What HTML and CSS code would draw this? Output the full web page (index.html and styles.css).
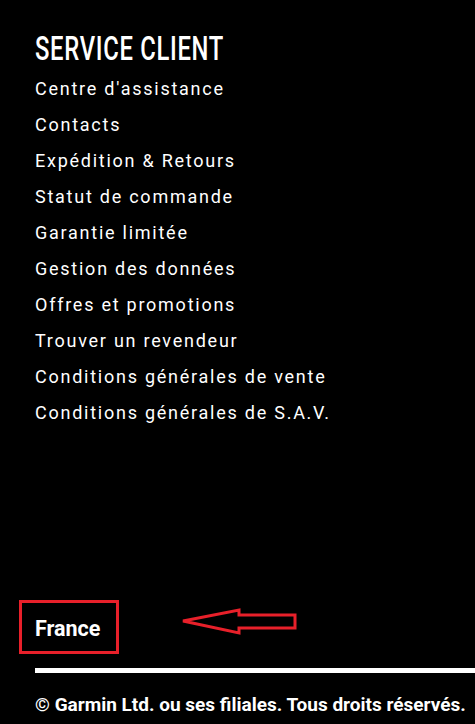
FILE: index.html
```html
<!DOCTYPE html>
<html lang="fr">
<head>
<meta charset="utf-8">
<title>Service client</title>
<link rel="stylesheet" href="styles.css">
</head>
<body>
<footer class="footer">
  <section class="service">
    <h2 class="service-title"><span>SERVICE CLIENT</span></h2>
    <ul class="links">
      <li><a href="#">Centre d'assistance</a></li>
      <li><a href="#">Contacts</a></li>
      <li><a href="#">Expédition &amp; Retours</a></li>
      <li><a href="#">Statut de commande</a></li>
      <li><a href="#">Garantie limitée</a></li>
      <li><a href="#">Gestion des données</a></li>
      <li><a href="#">Offres et promotions</a></li>
      <li><a href="#">Trouver un revendeur</a></li>
      <li><a href="#">Conditions générales de vente</a></li>
      <li><a href="#">Conditions générales de S.A.V.</a></li>
    </ul>
  </section>
  <div class="locale">
    <span class="country">France</span>
    <span class="highlight-box"></span>
    <svg class="highlight-arrow" width="120" height="30" viewBox="0 0 120 30">
      <polygon points="2,14 58,3 58,8 114,8 114,21 58,21 58,26" fill="none" stroke="#e8202a" stroke-width="3" stroke-linejoin="miter"/>
    </svg>
  </div>
  <hr class="rule">
  <p class="copyright">© Garmin Ltd. ou ses filiales. Tous droits réservés.</p>
</footer>
</body>
</html>
```
FILE: styles.css
```css
html, body {
  margin: 0;
  padding: 0;
  background: #000;
}
body {
  width: 475px;
  height: 724px;
  overflow: hidden;
  font-family: Roboto, "Liberation Sans", sans-serif;
  color: #fff;
}
.footer {
  padding: 30px 0 0 35px;
}
.service-title {
  margin: 0;
  height: 36px;
  font-family: Roboto, "Liberation Sans", sans-serif;
  font-weight: 500;
  font-size: 34px;
  line-height: 36px;
  letter-spacing: 1px;
}
.service-title span {
  display: inline-block;
  transform: scaleX(0.7);
  transform-origin: left center;
  white-space: nowrap;
}
.links {
  list-style: none;
  margin: 5px 0 0;
  padding: 0;
}
.links li {
  height: 36px;
  line-height: 36px;
}
.links a {
  color: #fff;
  text-decoration: none;
  font-size: 18px;
  letter-spacing: 1.75px;
}
.locale {
  position: relative;
  margin-top: 172px;
  height: 50px;
  display: flex;
  align-items: center;
}
.country {
  font-weight: 700;
  font-size: 21.5px;
}
.highlight-box {
  position: absolute;
  left: -16px;
  top: -3px;
  width: 94px;
  height: 48px;
  border: 3px solid #e8202a;
}
.highlight-arrow {
  position: absolute;
  left: 146px;
  top: 4px;
}
.rule {
  margin: 15px 0 0;
  border: 0;
  height: 5px;
  background: #fff;
}
.copyright {
  margin: 20px 0 0;
  font-weight: 700;
  font-size: 19px;
  white-space: nowrap;
}
```
